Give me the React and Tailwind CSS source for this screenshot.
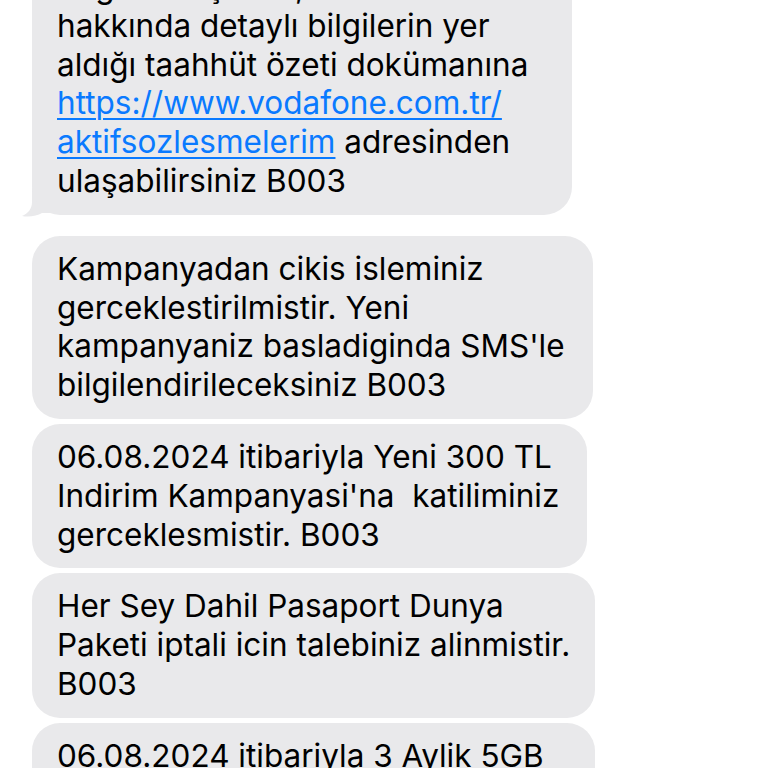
import React from "react";

const font = { fontFamily: 'Inter, "Noto Sans", sans-serif' };

function Bubble({ lines, width, tail, className = "" }) {
  return (
    <div className={`relative ${className}`} style={{ width }}>
      <div className="relative z-10 rounded-[28px] bg-[#e9e9eb] pl-[25px] pr-2 py-[14px] text-[31.5px] leading-[38.8px] text-black">
        {lines.map((l, i) => (
          <div key={i} className="whitespace-pre">{l}</div>
        ))}
      </div>
      {tail && (
        <svg className="absolute left-[-12px] bottom-[-3px] z-0" width="44" height="30" viewBox="0 0 44 30">
          <path d="M12 0 L12 14 C12 21 8 25.5 2 28 C9 29.5 17 28 22 25 L44 25 L44 0 Z" fill="#e9e9eb" />
        </svg>
      )}
    </div>
  );
}

export default function App() {
  const link = "text-[#0a7aff] underline decoration-[1.5px] underline-offset-[4px]";
  return (
    <div className="w-[768px] h-[768px] overflow-hidden bg-white" style={font}>
      <div className="flex flex-col pl-[32px]">
        <Bubble
          className="mt-[-46px]"
          width={540}
          tail
          lines={[
            "Bağlılık koşulları, ücretleri",
            "hakkında detaylı bilgilerin yer",
            "aldığı taahhüt özeti dokümanına",
            <span className={link}>https://www.vodafone.com.tr/</span>,
            <span>
              <span className={link}>aktifsozlesmelerim</span> adresinden
            </span>,
            "ulaşabilirsiniz B003",
          ]}
        />
        <Bubble
          className="mt-[21px]"
          width={561}
          lines={[
            "Kampanyadan cikis isleminiz",
            "gerceklestirilmistir. Yeni",
            "kampanyaniz basladiginda SMS'le",
            "bilgilendirileceksiniz B003",
          ]}
        />
        <Bubble
          className="mt-[5px]"
          width={555}
          lines={[
            "06.08.2024 itibariyla Yeni 300 TL",
            "Indirim Kampanyasi'na  katiliminiz",
            "gerceklesmistir. B003",
          ]}
        />
        <Bubble
          className="mt-[5px]"
          width={563}
          lines={[
            "Her Sey Dahil Pasaport Dunya",
            "Paketi iptali icin talebiniz alinmistir.",
            "B003",
          ]}
        />
        <Bubble
          className="mt-[5px]"
          width={563}
          lines={["06.08.2024 itibariyla 3 Aylik 5GB", "Hediye Internet"]}
        />
      </div>
    </div>
  );
}
